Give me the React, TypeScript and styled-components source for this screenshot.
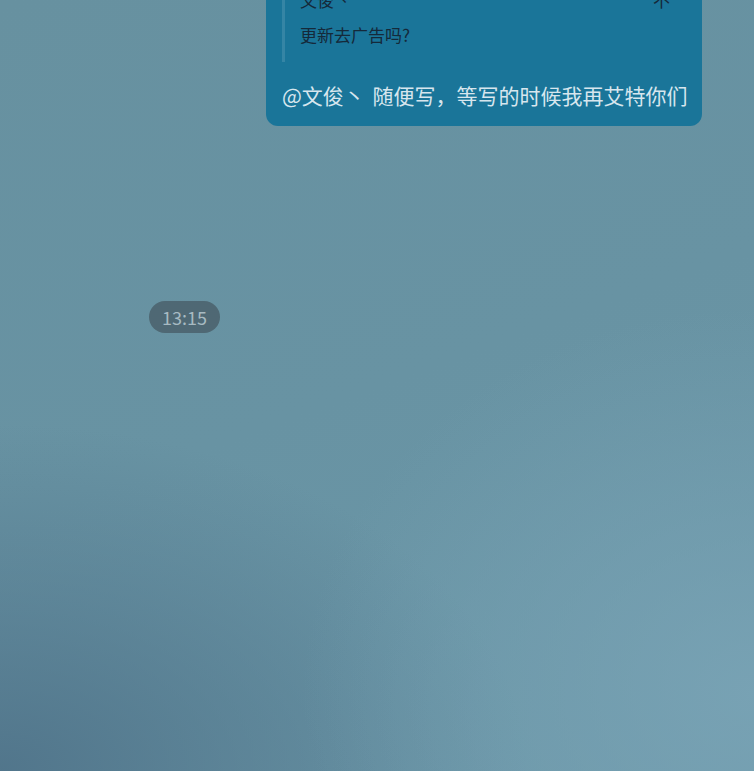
import React from "react";
import styled, { createGlobalStyle } from "styled-components";

const Global = createGlobalStyle`
  html, body { margin: 0; padding: 0; }
  body {
    width: 754px;
    height: 771px;
    overflow: hidden;
    font-family: "Noto Sans CJK SC", "Noto Sans", "Liberation Sans", sans-serif;
  }
`;

const Page = styled.div`
  width: 754px;
  height: 771px;
  overflow: hidden;
  background:
    radial-gradient(ellipse 60% 50% at 100% 90%, rgba(122, 164, 182, 0.85) 0%, rgba(122, 164, 182, 0) 100%),
    radial-gradient(ellipse 70% 45% at 0% 100%, rgba(80, 116, 138, 0.95) 0%, rgba(80, 116, 138, 0) 100%),
    linear-gradient(160deg, #6791a0 0%, #6893a3 50%, #6b97a8 100%);
`;

const MessageList = styled.div`
  display: flex;
  flex-direction: column;
  margin-top: -26px;
`;

const OutRow = styled.div`
  display: flex;
  justify-content: flex-end;
  padding-right: 52px;
`;

const Bubble = styled.div`
  width: 436px;
  box-sizing: border-box;
  background: #1a7599;
  border-radius: 12px;
  padding: 10px 16px 17px 16px;
  display: flex;
  flex-direction: column;
`;

const Quote = styled.div`
  border-left: 3px solid rgba(255, 255, 255, 0.12);
  padding: 4px 16px 15px 15px;
  display: flex;
  flex-direction: column;
  gap: 11px;
`;

const QuoteHead = styled.div`
  display: flex;
  justify-content: space-between;
  font-size: 17px;
  line-height: 24px;
  color: #15293a;
`;

const QuoteText = styled.div`
  font-size: 17px;
  line-height: 24px;
  color: #15293a;
`;

const MainText = styled.div`
  margin-top: 19px;
  font-size: 21px;
  line-height: 28px;
  color: #d7e6ee;
  white-space: nowrap;
  word-spacing: 3px;
`;

const TimeRow = styled.div`
  display: flex;
  margin-top: 175px;
  padding-left: 149px;
`;

const TimePill = styled.div`
  height: 32px;
  width: 71px;
  border-radius: 16px;
  background: rgba(72, 92, 102, 0.78);
  color: #a7bac2;
  font-size: 18px;
  display: flex;
  align-items: center;
  justify-content: center;
`;

export default function App() {
  return (
    <>
      <Global />
      <Page>
        <MessageList>
          <OutRow>
            <Bubble>
              <Quote>
                <QuoteHead>
                  <span>文俊丶</span>
                  <span>不</span>
                </QuoteHead>
                <QuoteText>更新去广告吗?</QuoteText>
              </Quote>
              <MainText>@文俊丶 随便写，等写的时候我再艾特你们</MainText>
            </Bubble>
          </OutRow>
          <TimeRow>
            <TimePill>13:15</TimePill>
          </TimeRow>
        </MessageList>
      </Page>
    </>
  );
}
